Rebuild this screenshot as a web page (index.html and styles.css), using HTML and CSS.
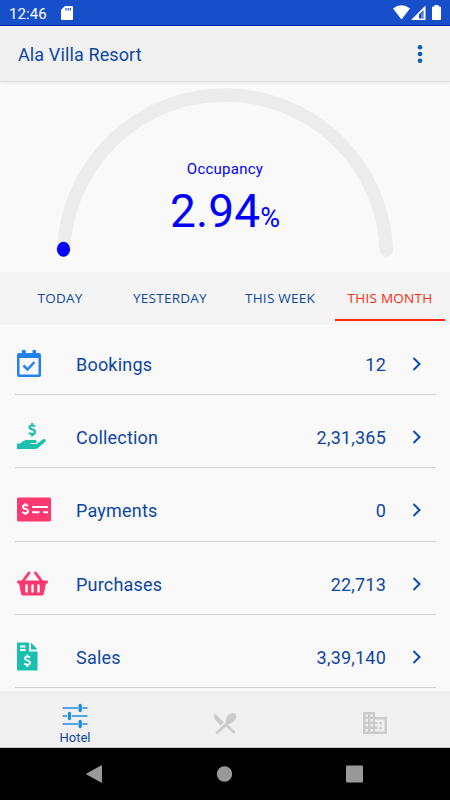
FILE: index.html
```
<!DOCTYPE html>
<html lang="en">

<head>
  <meta charset="utf-8">
  <title>Ala Villa Resort</title>
  <meta name="viewport" content="width=device-width, initial-scale=1.0">
  <link rel="stylesheet" href="styles.css">
</head>

<body>
  <div class="app">
    <div class="status-bar">
      <span class="time">12:46</span>
      <svg class="sd-card" width="12" height="15" viewBox="0 0 12 15">
        <path fill="#fff" d="M4 0h7q1 0 1 1v12q0 1-1 1H1q-1 0-1-1V4z" />
        <path stroke="#164fc9" stroke-width="1.2" d="M5 2v2.5M7.2 2v2.5M9.4 2v2.5" />
      </svg>
      <svg class="signals" width="50" height="16" viewBox="0 0 50 16">
        <path fill="#fff" d="M0 3.5Q8.500-3 17 3.500L8.500 14.500z" />
        <path fill="#fff" fill-rule="evenodd" d="M18 15L32.500 .5V15zM26 9.500V13.500H30.500V5z" />
        <path fill="#fff" d="M28 9l2-2v6h-2z" opacity=".3" />
        <path fill="#fff" d="M41.500 0h4v1.500h1.500q1 0 1 1V14q0 1-1 1h-7q-1 0-1-1V2.500q0-1 1-1h1.500z" />
      </svg>
    </div>

    <header class="header">
      <h1>Ala Villa Resort</h1>
      <svg width="6" height="20" viewBox="0 0 6 20" fill="#075cb5">
        <circle cx="3" cy="3.200" r="2.300" />
        <circle cx="3" cy="10" r="2.300" />
        <circle cx="3" cy="16.800" r="2.300" />
      </svg>
    </header>

    <section class="gauge">
      <svg class="gauge-arc" width="450" height="190" viewBox="0 0 450 190">
        <path d="M63.630 168A161.500 161.500 0 0 1 386.370 168" fill="none" stroke="#ececec" stroke-width="13.300" stroke-linecap="round" />
        <ellipse cx="63.500" cy="167.200" rx="6.600" ry="7.500" fill="#00f" />
      </svg>
      <p class="gauge-label">Occupancy</p>
      <p class="gauge-value">2.94<span>%</span></p>
    </section>

    <nav class="tabs">
      <a class="tab">TODAY</a>
      <a class="tab">YESTERDAY</a>
      <a class="tab">THIS WEEK</a>
      <a class="tab active">THIS MONTH</a>
    </nav>

    <ul class="list">
      <li>
        <svg class="icon" width="36" height="30" viewBox="0 0 36 30">
          <path fill="#2380ee" fill-rule="evenodd" d="M2 4H5V1H8.700V4H15.500V1H19V4H22Q24 4 24 6V26Q24 28 22 28H2Q0 28 0 26V6Q0 4 2 4zM2.500 9V25.500H21.500V9z" />
          <path fill="none" stroke="#2380ee" stroke-width="2.500" d="M6.500 16.500l4 4 7-7.500" />
        </svg>
        <span class="name">Bookings</span>
        <span class="amount">12</span>
        <svg class="arrow" width="10" height="14" viewBox="0 0 10 14"><path d="M1.500 1L7.500 7L1.500 13" /></svg>
      </li>
      <li>
        <svg class="icon" width="36" height="30" viewBox="0 0 36 30">
          <path fill="#1abfae" d="M0 21.500h3l3-2.300q2-1.200 4-1.200h8q1.800 0 1.800 1.500t-1.800 1.500h-4.500v1h6l6.500-4.700q1.700-.8 2.500.2t-.3 2.300l-7 6q-1.200 1.200-3 1.200H0z" />
          <path fill="none" stroke="#1abfae" stroke-width="2.200" d="M18 4.500Q16.500 3.500 15 3.500Q12.500 3.500 12.500 5.300Q12.500 6.800 15.200 7.400Q18 8 18 9.900Q18 12 15.200 12Q13.500 12 12 10.900M15.200 1V3.500M15.200 12V14.500" />
        </svg>
        <span class="name">Collection</span>
        <span class="amount">2,31,365</span>
        <svg class="arrow" width="10" height="14" viewBox="0 0 10 14"><path d="M1.500 1L7.500 7L1.500 13" /></svg>
      </li>
      <li>
        <svg class="icon" width="36" height="30" viewBox="0 0 36 30">
          <rect y="2.500" width="34" height="24" rx="1.500" fill="#fc3870" />
          <path fill="none" stroke="#fff" stroke-width="1.900" d="M11 11Q9.800 10 8.400 10Q6 10 6 11.800Q6 13.400 8.400 13.900Q11 14.500 11 16.300Q11 18.200 8.400 18.200Q6.700 18.200 5.300 17.100M8.400 8.200V10M8.400 18.200V20M15 12H31M15 17.300H22.500M26 17.300H31" />
        </svg>
        <span class="name">Payments</span>
        <span class="amount">0</span>
        <svg class="arrow" width="10" height="14" viewBox="0 0 10 14"><path d="M1.500 1L7.500 7L1.500 13" /></svg>
      </li>
      <li>
        <svg class="icon" width="36" height="30" viewBox="0 0 36 30">
          <path fill="none" stroke="#fc3870" stroke-width="2.900" stroke-linecap="round" d="M12 4L6 12M18.500 4L24.500 12" />
          <path fill="#fc3870" d="M1 11.500H30Q31 11.500 31 13T30 14.500H29L26.700 25Q26.300 26.500 24.800 26.500H6Q4.500 26.500 4.100 25L2 14.500H1Q0 14.500 0 13T1 11.500z" />
          <path stroke="#fff" stroke-width="2.400" stroke-linecap="round" d="M9.500 16.500v6M15.500 16.500v6M21.500 16.500v6" />
        </svg>
        <span class="name">Purchases</span>
        <span class="amount">22,713</span>
        <svg class="arrow" width="10" height="14" viewBox="0 0 10 14"><path d="M1.500 1L7.500 7L1.500 13" /></svg>
      </li>
      <li>
        <svg class="icon" width="36" height="30" viewBox="0 0 36 30">
          <path fill="#1abfae" d="M0 .5H12V9.500H20.500V28.500H0zM14 .5L20.500 7.500H14z" />
          <path fill="none" stroke="#fff" stroke-width="1.800" d="M3 4.500H8.500M3 8H8.500M13 15.500Q11.800 14.600 10.300 14.600Q8 14.600 8 16.300Q8 17.700 10.300 18.300Q13 19 13 20.700Q13 22.600 10.300 22.600Q8.700 22.600 7.300 21.500M10.300 12.600V14.600M10.300 22.600V25" />
        </svg>
        <span class="name">Sales</span>
        <span class="amount">3,39,140</span>
        <svg class="arrow" width="10" height="14" viewBox="0 0 10 14"><path d="M1.500 1L7.500 7L1.500 13" /></svg>
      </li>
    </ul>

    <nav class="bottom-nav">
      <a class="nav-item selected">
        <svg width="26" height="26" viewBox="0 0 26 26">
          <path stroke="#1a8edb" stroke-width="1.500" d="M.5 5H16M20.500 5H25.500M.5 13H5M10 13H25.500M.5 21H16M20.500 21H25.500" />
          <path stroke="#1a8edb" stroke-width="3.300" stroke-linecap="round" d="M18.200 2.500V7.500M7.500 10.500V15.500M18.200 18.500V23.500" />
        </svg>
        <span>Hotel</span>
      </a>
      <a class="nav-item">
        <!-- knife and spoon -->
        <svg width="24" height="24" viewBox="0 0 24 24" fill="#cbcbcb">
          <path d="M1.800 1.500L11 10.500L7.500 13.500L2.500 8Q-.5 4.500 1.800 1.500z" />
          <path d="M15 12.500L22.500 20.200L20.700 22L13.100 14.600L4 22.600L2.200 20.800L13.200 10.200Q12.200 7 14.500 4Q18 .2 22 1.200Q25 4.500 21.500 8.700Q18.500 11.800 15 12.500z" />
        </svg>
      </a>
      <a class="nav-item">
        <!-- office building -->
        <svg width="24" height="22" viewBox="0 0 24 22">
          <path fill="#cbcbcb" fill-rule="evenodd" d="M0 0H12V5H24V22H0zM2.500 2.500v2h2.500v-2zM7.500 2.500v2H10v-2zM2.500 7v2.500h2.500V7zM7.500 7v2.500H10V7zM2.500 12v2.500h2.500V12zM7.500 12v2.500H10V12zM2.500 17v2.500h2.500V17zM7.500 17v2.500H10V17zM12 7.500V10h2.500v2H12v2.500h2.500v2.500H12v2.500h9.500v-12zM16.500 10H19v2.200h-2.500zM16.500 14.700H19V17h-2.500z" />
        </svg>
      </a>
    </nav>

    <div class="system-nav">
      <svg width="16" height="18" viewBox="0 0 16 18"><path d="M16 1v16q0 1-1 .5L.5 9.500q-.7-.5 0-1L15 .5q1-.5 1 .5z" /></svg>
      <svg width="16" height="18" viewBox="0 0 16 18"><circle cx="8.500" cy="9" r="7.700" /></svg>
      <svg width="17" height="18" viewBox="0 0 17 18"><rect y="0.500" width="17" height="17" rx="1" /></svg>
    </div>
  </div>
</body>

</html>
```

FILE: styles.css
```
:root {
  --text-color: #0d47a1;
  --active-color: #ff2a0d;
  --bar-color: #f0f0f0;
}

* {
  box-sizing: border-box;
}

body {
  margin: 0;
  font-family: Roboto, sans-serif;
  color: var(--text-color);
  background-color: #f9f9f9;
}

.app {
  height: 800px;
  display: flex;
  flex-direction: column;
  overflow: hidden;
}

.status-bar {
  height: 26px;
  padding: 0 8px 0 9px;
  display: flex;
  align-items: center;
  flex-shrink: 0;
  background-color: #164fc9;
  border-bottom: 1px solid #0724b5;
  color: white;
}

.time {
  font-size: 15px;
  letter-spacing: 0.1px;
  padding-top: 2px;
}

.sd-card {
  margin-left: 14px;
  margin-top: 1px;
}

.signals {
  margin-left: auto;
  margin-right: -1px;
  margin-top: 1px;
}

.header {
  height: 56px;
  padding: 0 27px 0 18px;
  display: flex;
  align-items: center;
  justify-content: space-between;
  flex-shrink: 0;
  background-color: var(--bar-color);
  border-bottom: 1px solid #dedede;
  box-shadow: 0 1px 3px rgba(0, 0, 0, 0.08);
}

h1 {
  margin: 0;
  padding-top: 2px;
  font-size: 18px;
  font-weight: 400;
  letter-spacing: 0.12px;
}

.gauge {
  position: relative;
  height: 190px;
  flex-shrink: 0;
  text-align: center;
  color: #0000ff;
}

.gauge-arc {
  position: absolute;
  top: 0;
  left: 0;
}

.gauge-label {
  margin: 0;
  padding-top: 77px;
  font-size: 15px;
  line-height: 20px;
  letter-spacing: 0.25px;
}

.gauge-value {
  margin: 5px 0 0;
  font-size: 46px;
  line-height: 54px;
  letter-spacing: 0.1px;
}

.gauge-value span {
  font-size: 27px;
  letter-spacing: 0;
}

.tabs {
  height: 54px;
  padding: 0 5px;
  display: flex;
  flex-shrink: 0;
  background-color: #f4f4f4;
  border-bottom: 1px solid #fdfdfd;
}

.tab {
  width: 110px;
  height: 49px;
  padding-top: 3px;
  line-height: 47px;
  text-align: center;
  font-family: "Open Sans", sans-serif;
  font-size: 13.5px;
  letter-spacing: 0.25px;
}

.tab.active {
  color: var(--active-color);
  border-bottom: 2px solid var(--active-color);
}

.list {
  flex: 1;
  min-height: 0;
  margin: 0;
  padding: 0 14px 0 15px;
  overflow: hidden;
  list-style: none;
}

.list li {
  height: 73.3px;
  padding: 12px 14px 0 2px;
  display: flex;
  align-items: center;
  border-bottom: 1px solid #d2d2d2;
  font-size: 18px;
  letter-spacing: 0.2px;
}

.list li:first-child {
  height: 69px;
  padding-top: 8px;
}

.icon {
  margin-right: 23px;
}

.amount {
  margin-left: auto;
  margin-right: 26px;
}

.name,
.amount {
  padding-top: 1px;
}

.arrow {
  fill: none;
  stroke: #0d4db3;
  stroke-width: 2;
}

.bottom-nav {
  height: 57px;
  display: flex;
  flex-shrink: 0;
  background-color: var(--bar-color);
  border-bottom: 1px solid #c4c4c4;
}

.nav-item {
  width: 150px;
  display: flex;
  flex-direction: column;
  align-items: center;
  padding-top: 21px;
}

.nav-item.selected {
  padding-top: 12px;
  font-size: 13px;
  line-height: 17px;
}

.system-nav {
  height: 52px;
  padding: 0 87px 0 86px;
  display: flex;
  align-items: center;
  justify-content: space-between;
  flex-shrink: 0;
  background-color: black;
  fill: #999999;
}
```
